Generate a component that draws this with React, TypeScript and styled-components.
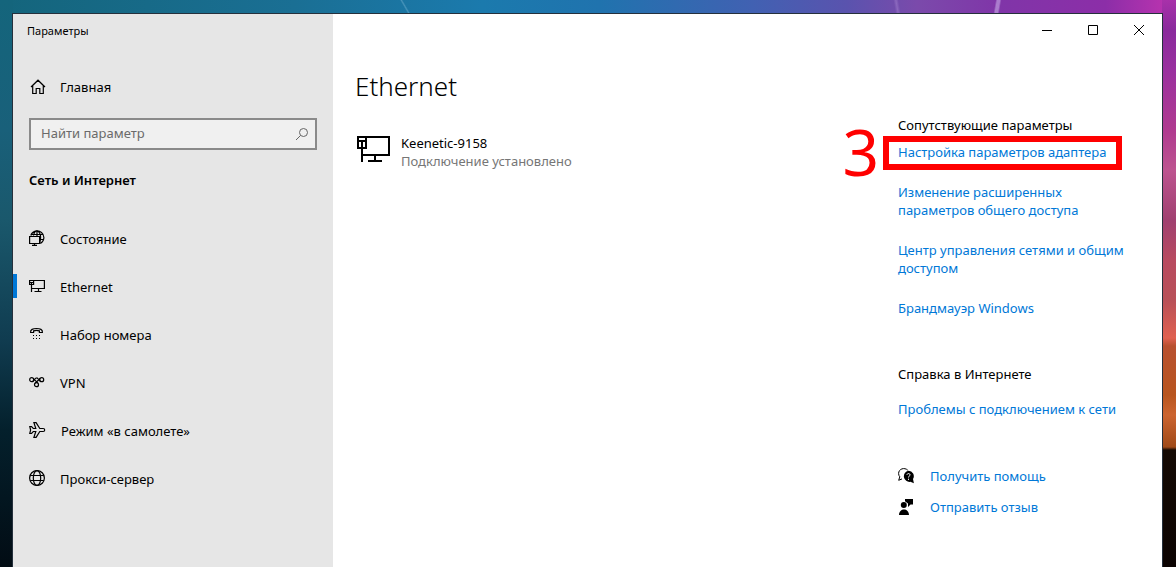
import React from "react";
import styled, { createGlobalStyle } from "styled-components";

const GlobalStyle = createGlobalStyle`
  * { box-sizing: border-box; }
  body {
    margin: 0;
    color: #000;
    font-family: "Segoe UI", "Noto Sans", sans-serif;
    font-size: 13px;
    line-height: 18px;
  }
  h1, h2, p, ul { margin: 0; padding: 0; }
  ul { list-style: none; }
`;

const Desktop = styled.div`
  display: flex;
  min-height: 100vh;
  padding: 13px 13px 0 12px;
  background:
    linear-gradient(100deg, transparent 44%, #c0a0e0aa 48%, #c0a0e0aa 54%, transparent 58%) 86% 0 / 40px 13px no-repeat,
    linear-gradient(60deg, transparent 46%, #8ac0dc66 50%, transparent 54%) 34% 0 / 30px 13px no-repeat,
    linear-gradient(80deg, transparent 42%, #b090d866 50%, transparent 58%) 77% 0 / 30px 13px no-repeat,
    linear-gradient(180deg, #a831aa 0, #8a2a9c 30px, #9a309f 70px, #b03a90 130px, #bd5490 170px, #a04070 220px, #b84a60 260px, #b85058 300px, #e06050 338px, #b85030 346px, #b8551f 395px, #cc6430 415px, #a04a18 447px, #150a04 450px, #0c0402 100%) right top / 14px 100% no-repeat,
    linear-gradient(180deg, #14657c 0, #19607a 130px, #1a586c 220px, #103c50 340px, #04202c 430px, #020c14 100%) left top / 13px 100% no-repeat,
    linear-gradient(90deg, #14657c 0, #1a6f94 25%, #1b7aad 41%, #2073ae 51%, #4161b2 64%, #5a53ae 72%, #7b4aab 78%, #8035a8 85%, #8c2ea8 94%, #c034b0 100%);
`;

const Window = styled.main`
  display: flex;
  flex: 1;
  min-width: 0;
  border: 1px solid #25303c;
  border-bottom: 0;
  background: #fff;
`;

const Sidebar = styled.aside`
  flex: 0 0 320px;
  background: #e6e6e6;
`;

const WindowTitle = styled.p`
  padding: 8px 14px;
  font-size: 11px;
`;

const HomeLink = styled.a`
  display: flex;
  align-items: center;
  gap: 14px;
  height: 48px;
  margin-top: 15px;
  padding-left: 17px;
  color: inherit;
  text-decoration: none;
`;

const SearchBox = styled.label`
  display: flex;
  align-items: center;
  height: 32px;
  margin: 7px 16px 0;
  padding: 0 6px 0 10px;
  border: 2px solid #8a8a8a;
  background: #f0f0f0;
  color: #666;
`;

const SearchInput = styled.input`
  flex: 1;
  min-width: 0;
  padding: 0 0 2px;
  border: 0;
  outline: 0;
  background: transparent;
  font: inherit;
  &::placeholder { color: #6a6a6a; opacity: 1; }
`;

const SectionTitle = styled.h2`
  margin: 21px 16px 26px;
  font-size: 13px;
  font-weight: 600;
  line-height: 18px;
`;

const Glyph = styled.svg<{ $weight?: number }>`
  flex: none;
  display: block;
  fill: none;
  stroke: currentColor;
  stroke-width: ${(p) => p.$weight ?? 1};
`;

const NavLink = styled.a<{ $active?: boolean }>`
  display: flex;
  align-items: center;
  gap: 15px;
  height: 48px;
  padding-left: 16px;
  background: ${(p) => (p.$active ? "linear-gradient(#0078d7, #0078d7) left 11px / 4px 24px no-repeat" : "none")};
  color: inherit;
  text-decoration: none;

  ${Glyph} { margin-bottom: 2px; }
`;

const Content = styled.div`
  display: flex;
  flex: 1;
  flex-direction: column;
  min-width: 0;
`;

const Caption = styled.div`
  display: flex;
  justify-content: flex-end;
  height: 32px;
`;

const CaptionButton = styled.button`
  display: grid;
  place-items: center;
  width: 46px;
  padding: 0;
  border: 0;
  background: transparent;
  color: #000;
`;

const Columns = styled.div`
  display: flex;
  justify-content: space-between;
  padding: 0 31px 0 22px;
`;

const Primary = styled.section`
  padding-top: 22px;
`;

const PageTitle = styled.h1`
  font-size: 26px;
  font-weight: 300;
  line-height: 36px;
`;

const Connection = styled.div`
  display: flex;
  gap: 10px;
  margin-top: 30px;
`;

const Muted = styled.p`
  color: #767676;
`;

const Related = styled.aside`
  flex: 0 0 233px;
  padding-top: 70px;
`;

const RelatedTitle = styled.h2`
  font-size: 13px;
  font-weight: 400;
  line-height: 18px;
`;

const LinkList = styled.ul`
  display: flex;
  flex-direction: column;
  gap: 22px;
  margin: 9px 0 48px;
`;

const TextLink = styled.a`
  color: #0078d7;
  text-decoration: none;
`;

const SupportList = styled.ul`
  margin-top: 17px;
`;

const Highlighted = styled.li`
  position: relative;
`;

const Marker = styled.div`
  position: absolute;
  top: -7px;
  left: -15px;
  width: 239px;
  height: 34px;
  border: 6px solid #f00;
  pointer-events: none;
`;

const StepNumber = styled.span`
  position: absolute;
  right: calc(100% + 10px);
  top: -22px;
  color: #f00;
  font-size: 64px;
  line-height: 64px;
`;

const HelpLinks = styled.ul`
  display: flex;
  flex-direction: column;
  gap: 13px;
  margin-top: 49px;
`;

const HelpItem = styled.li`
  display: flex;
  align-items: center;
  gap: 16px;
`;

const HomeIcon = () => (
  <Glyph width="16" height="16" viewBox="0 0 16 16" $weight={1.2}>
    <path d="M1 8 8 1.200 15 8M2.700 6.700v7.800h3.500v-5h3.600v5h3.500V6.700" />
  </Glyph>
);
const SearchIcon = () => (
  <Glyph width="14" height="14" viewBox="0 0 14 14">
    <circle cx="8.5" cy="5.5" r="4" />
    <path d="M5.600 8.400 1 13" />
  </Glyph>
);
const GlobeIcon = () => (
  <Glyph width="16" height="16" viewBox="0 0 16 16" $weight={1.2}>
    <circle cx="8" cy="8" r="7.400" />
    <ellipse cx="8" cy="8" rx="3.700" ry="7.400" />
    <path d="M1.200 5.500h13.600M1.200 10.500h13.600" />
  </Glyph>
);
const StatusIcon = () => (
  <Glyph width="16" height="16" viewBox="0 0 16 16" $weight={1.2}>
    <path d="M1.800 5.500a6.700 6.700 0 1 1 9.500 8M4.500 5.500C5 3 6.200.8 8 .8s3.600 3 3.600 6.400c0 2-.3 4-1 5.500M2.500 4.500h11.700M11 9.500h3.500M8 1v5" />
    <path d="M.6 6.500h10v7H.6z" fill="#e6e6e6" />
    <path d="M5.500 13.500v2M3 15.400h5" />
  </Glyph>
);
const EthernetIcon = () => (
  <Glyph width="16" height="16" viewBox="0 0 16 16" $weight={1.2}>
    <path d="M5 2.500h10.400v8H3M.6 2.500h4v4h-4zM1 4.500h3M2.500 4.500v9.500M9.500 10.500v3M5.500 13.500h7" />
  </Glyph>
);
const EthernetLargeIcon = () => (
  <Glyph width="36" height="30" viewBox="0 0 36 30" $weight={2}>
    <path d="M11 3h23v18H7M3 3h8v11H3zM3 7h8M7 7v21M20 21v6M13 27h14" />
  </Glyph>
);
const DialIcon = () => (
  <Glyph width="16" height="16" viewBox="0 0 16 16" $weight={1.2}>
    <path d="M1.600 6.500C1.200 3.500 4 2.500 7.500 2.500s6.300 1 5.900 4h-3V4.900C9 4.300 6 4.300 4.600 4.900v1.600z" />
    <path d="M4 9.500h1m2 0h1m2 0h1M4 12.500h1m2 0h1m2 0h1" />
  </Glyph>
);
const VpnIcon = () => (
  <Glyph width="16" height="16" viewBox="0 0 16 16" $weight={1.2}>
    <circle cx="2.700" cy="5.700" r="2" />
    <circle cx="12.700" cy="5.700" r="2" />
    <circle cx="7.500" cy="10.700" r="2" />
    <path d="M4 4.200 8.800 9.200M11.300 4.200 6.200 9.200M4 7.200 7.500 3.700M11.300 7.200 7.800 3.700" />
  </Glyph>
);
const PlaneIcon = () => (
  <Glyph width="17" height="16" viewBox="0 0 17 16" $weight={1.2}>
    <path d="M.8 4.500h1.700l1.800 2h2.500L4.900.6h2.200l3.700 5.900h3.400a1.500 1.500 0 0 1 0 3h-3.400l-3.700 5.900H4.900l1.900-5.900H4.300l-1.800 2H.8l.8-3.500z" />
  </Glyph>
);
const HelpIcon = () => (
  <Glyph width="16" height="16" viewBox="0 0 16 16">
    <path d="M9.800 2.200C6.500-1 .5.800.6 5.600c0 1.400.5 2.300 1.200 3.200L.7 12.300l3.300-1.400" />
    <path d="M10.500 2.800a5.400 5.400 0 0 1 4.500 8.200l.9 4.200-3.500-1.400A5.500 5.500 0 1 1 10.500 2.800z" fill="#000" stroke="none" />
    <path d="M9 6.800c.2-1.800 3.200-1.600 3 .2-.1 1-1.500 1.200-1.500 2.500M10.500 10.700v1.200" stroke="#fff" />
  </Glyph>
);
const FeedbackIcon = () => (
  <Glyph width="16" height="16" viewBox="0 0 16 16">
    <g fill="#000" stroke="none">
      <circle cx="5.800" cy="6" r="3" />
      <path d="M1 16c0-7.500 10-7.500 10 0zM7 0h8v5.500h-2.500L10 8V4.500L7 2.200z" />
    </g>
  </Glyph>
);

const sections = [
  { label: "Состояние", Icon: StatusIcon },
  { label: "Ethernet", Icon: EthernetIcon, active: true },
  { label: "Набор номера", Icon: DialIcon },
  { label: "VPN", Icon: VpnIcon },
  { label: "Режим «в самолете»", Icon: PlaneIcon },
  { label: "Прокси-сервер", Icon: GlobeIcon },
];

export default function App() {
  return (
    <>
      <GlobalStyle />
      <Desktop>
        <Window>
          <Sidebar>
            <WindowTitle>Параметры</WindowTitle>
            <HomeLink href="#home"><HomeIcon />Главная</HomeLink>
            <SearchBox>
              <SearchInput type="text" placeholder="Найти параметр" aria-label="Найти параметр" />
              <SearchIcon />
            </SearchBox>
            <SectionTitle>Сеть и Интернет</SectionTitle>
            <nav>
              {sections.map(({ label, Icon, active }) => (
                <NavLink key={label} href="#section" $active={active}><Icon />{label}</NavLink>
              ))}
            </nav>
          </Sidebar>
          <Content>
            <Caption>
              <CaptionButton aria-label="Свернуть"><Glyph width="10" height="10"><path d="M0 5.500h10" /></Glyph></CaptionButton>
              <CaptionButton aria-label="Развернуть"><Glyph width="10" height="10"><path d="M.5.5h9v9h-9z" /></Glyph></CaptionButton>
              <CaptionButton aria-label="Закрыть"><Glyph width="10" height="10"><path d="m0 0 10 10M10 0 0 10" /></Glyph></CaptionButton>
            </Caption>
            <Columns>
              <Primary>
                <PageTitle>Ethernet</PageTitle>
                <Connection>
                  <EthernetLargeIcon />
                  <div>
                    <p>Keenetic-9158</p>
                    <Muted>Подключение установлено</Muted>
                  </div>
                </Connection>
              </Primary>
              <Related>
                <RelatedTitle>Сопутствующие параметры</RelatedTitle>
                <LinkList>
                  <Highlighted>
                    <TextLink href="#adapter">Настройка параметров адаптера</TextLink>
                    <Marker><StepNumber>3</StepNumber></Marker>
                  </Highlighted>
                  <li><TextLink href="#sharing">Изменение расширенных параметров общего доступа</TextLink></li>
                  <li><TextLink href="#center">Центр управления сетями и общим доступом</TextLink></li>
                  <li><TextLink href="#firewall">Брандмауэр Windows</TextLink></li>
                </LinkList>
                <RelatedTitle>Справка в Интернете</RelatedTitle>
                <SupportList>
                  <li><TextLink href="#trouble">Проблемы с подключением к сети</TextLink></li>
                </SupportList>
                <HelpLinks>
                  <HelpItem><HelpIcon /><TextLink href="#help">Получить помощь</TextLink></HelpItem>
                  <HelpItem><FeedbackIcon /><TextLink href="#feedback">Отправить отзыв</TextLink></HelpItem>
                </HelpLinks>
              </Related>
            </Columns>
          </Content>
        </Window>
      </Desktop>
    </>
  );
}
